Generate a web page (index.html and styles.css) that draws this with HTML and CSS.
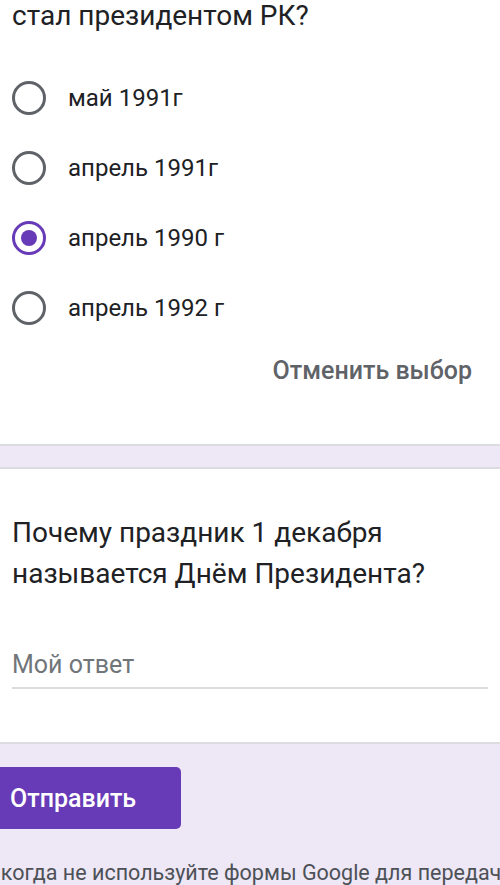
FILE: index.html
```html
<!DOCTYPE html>
<html lang="ru">
  <head>
    <meta charset="UTF-8" />
    <meta name="viewport" content="width=device-width, initial-scale=1.0" />
    <title>Форма</title>
    <link rel="stylesheet" href="styles.css">
  </head>
  <body>
    <div class="card first">
      <div class="question">стал президентом РК?</div>
      <div class="options">
        <label class="option">
          <span class="radio"></span>
          <span class="option-text">май 1991г</span>
        </label>
        <label class="option">
          <span class="radio"></span>
          <span class="option-text">апрель 1991г</span>
        </label>
        <label class="option">
          <span class="radio checked"></span>
          <span class="option-text">апрель 1990 г</span>
        </label>
        <label class="option">
          <span class="radio"></span>
          <span class="option-text">апрель 1992 г</span>
        </label>
      </div>
      <div class="clear-row">
        <span class="clear">Отменить выбор</span>
      </div>
    </div>

    <div class="card second">
      <div class="question two">Почему праздник 1 декабря называется Днём Президента?</div>
      <div class="answer">Мой ответ</div>
    </div>

    <div class="footer">
      <button type="button" class="submit">Отправить</button>
      <p class="note">Никогда не используйте формы Google для передачи паролей.</p>
    </div>
  </body>
</html>
```

FILE: styles.css
```css
body {
  font-family: Roboto, "Liberation Sans", sans-serif;
  background-color: #ede7f6;
  margin: 0;
  padding: 0;
  color: #202124;
  overflow: hidden;
}
.card {
  background-color: white;
  border-bottom: 2px solid #dadce0;
  padding: 0 12px;
}
.first {
  height: 446px;
  box-sizing: border-box;
  padding-top: 0;
}
.second {
  margin-top: 21px;
  border-top: 2px solid #dadce0;
  height: 277px;
  box-sizing: border-box;
  padding-top: 43px;
}
.question {
  font-size: 28px;
  line-height: 32px;
}
.question.two {
  line-height: 41px;
  padding-right: 40px;
}
.options {
  margin-top: 31px;
}
.option {
  display: flex;
  align-items: center;
  height: 70px;
}
.radio {
  width: 28px;
  height: 28px;
  border: 3px solid #5f6368;
  border-radius: 50%;
  display: flex;
  align-items: center;
  justify-content: center;
  margin-right: 22px;
}
.radio.checked {
  border-color: #673ab7;
}
.radio.checked::after {
  content: "";
  width: 16px;
  height: 16px;
  border-radius: 50%;
  background-color: #673ab7;
}
.option-text {
  font-size: 24px;
}
.clear-row {
  display: flex;
  justify-content: flex-end;
  margin-top: 13px;
  padding-right: 16px;
}
.clear {
  font-size: 25px;
  color: #5f6368;
  font-weight: 500;
}
.answer {
  margin-top: 56px;
  font-size: 25px;
  color: #70757a;
  padding-bottom: 8px;
  border-bottom: 2px solid #dadce0;
}
.footer {
  padding-top: 23px;
  margin-left: -14px;
}
.submit {
  background-color: #673ab7;
  color: white;
  border: none;
  border-radius: 5px;
  height: 62px;
  width: 195px;
  text-align: left;
  padding: 0 24px;
  font-family: inherit;
  font-size: 25px;
  font-weight: 500;
}
.note {
  margin: 31px 0 0 -13px;
  font-size: 21.5px;
  color: #4d5156;
  white-space: nowrap;
}
```
